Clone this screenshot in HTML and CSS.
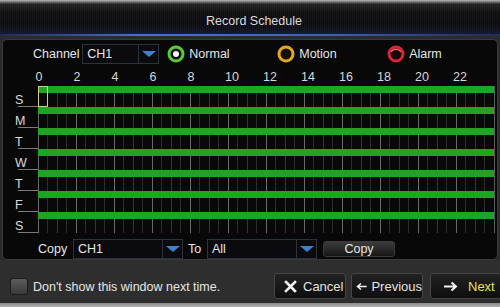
FILE: index.html
```html
<!DOCTYPE html>
<html>
<head>
<meta charset="utf-8">
<link rel="stylesheet" href="styles.css">
</head>
<body>
<div class="screen">
  <div class="titlebar"><span class="title">Record Schedule</span></div>
  <div class="panel">
    <div class="chrow">
      <span class="lbl">Channel</span>
      <div class="select ch"><span class="val">CH1</span><span class="arrow"><i></i></span></div>
      <div class="radio">
        <svg width="18" height="18" viewBox="0 0 18 18"><circle cx="9" cy="9" r="7" fill="#101010" stroke="#5cc93a" stroke-width="3"/><circle cx="9" cy="9" r="3" fill="#f4f4f4"/></svg>
        <span>Normal</span>
      </div>
      <div class="radio">
        <svg width="18" height="18" viewBox="0 0 18 18"><circle cx="9" cy="9" r="7" fill="#141008" stroke="#e2a826" stroke-width="3"/></svg>
        <span>Motion</span>
      </div>
      <div class="radio">
        <svg width="18" height="18" viewBox="0 0 18 18"><circle cx="9" cy="9" r="7" fill="#180808" stroke="#d42636" stroke-width="3"/><path d="M4 7 A6 6 0 0 1 14 7" fill="none" stroke="#f07080" stroke-width="1.2"/></svg>
        <span>Alarm</span>
      </div>
    </div>
    <div class="hours">
      <span>0</span><span>2</span><span>4</span><span>6</span><span>8</span><span class="dd">10</span><span class="dd">12</span><span class="dd">14</span><span class="dd">16</span><span class="dd">18</span><span class="dd">20</span><span class="dd">22</span>
    </div>
    <div class="grid">
      <div class="row"><div class="day">S</div><div class="track"><div class="bar"></div><div class="sel"></div></div></div>
      <div class="row"><div class="day">M</div><div class="track"><div class="bar"></div></div></div>
      <div class="row"><div class="day">T</div><div class="track"><div class="bar"></div></div></div>
      <div class="row"><div class="day">W</div><div class="track"><div class="bar"></div></div></div>
      <div class="row"><div class="day">T</div><div class="track"><div class="bar"></div></div></div>
      <div class="row"><div class="day">F</div><div class="track"><div class="bar"></div></div></div>
      <div class="row"><div class="day">S</div><div class="track"><div class="bar"></div></div></div>
    </div>
    <div class="copyrow">
      <span class="lbl">Copy</span>
      <div class="select wide"><span class="val">CH1</span><span class="arrow"><i></i></span></div>
      <span class="lbl to">To</span>
      <div class="select wide"><span class="val">All</span><span class="arrow"><i></i></span></div>
      <button class="copybtn">Copy</button>
    </div>
  </div>
  <div class="footer">
    <div class="check"><span class="box"></span><span>Don't show this window next time.</span></div>
    <div class="buttons">
      <button class="btn cancel">
        <svg width="13" height="13" viewBox="0 0 13 13"><path d="M2 2 L11 11 M11 2 L2 11" stroke="#f2f2f2" stroke-width="2.6" stroke-linecap="square"/></svg>
        <span>Cancel</span>
      </button>
      <button class="btn prev">
        <svg width="15" height="11" viewBox="0 0 15 11"><path d="M14 5.5 H2.5 M6.5 1.5 L2 5.5 L6.5 9.5" fill="none" stroke="#f2f2f2" stroke-width="2"/></svg>
        <span>Previous</span>
      </button>
      <button class="btn next">
        <svg width="15" height="11" viewBox="0 0 15 11"><path d="M1 5.5 H12.5 M8.5 1.5 L13 5.5 L8.5 9.5" fill="none" stroke="#f2f2f2" stroke-width="2"/></svg>
        <span class="nexttxt">Next</span>
      </button>
    </div>
  </div>
  <div class="strip"></div>
</div>
</body>
</html>
```
FILE: styles.css
```css
* { box-sizing: border-box; }
html, body { margin: 0; padding: 0; }
body {
  width: 500px;
  height: 307px;
  overflow: hidden;
  background: #2b2b2b;
  font-family: "Liberation Sans", Arial, sans-serif;
  font-size: 12.5px;
  color: #e6e6e6;
}
.screen { width: 500px; height: 307px; display: flex; flex-direction: column; overflow: hidden; }

.titlebar {
  height: 36px;
  flex: none;
  display: flex;
  align-items: center;
  justify-content: center;
  padding: 6px 0 0 8px;
  background:
    linear-gradient(90deg, #1c2c5a 0%, #4a70c8 28%, #3d62b8 65%, #1c2c5a 100%) left bottom / 100% 2px no-repeat,
    repeating-linear-gradient(90deg, rgba(255,255,255,0.035) 0 1px, transparent 1px 2px),
    linear-gradient(180deg, #b4b4b4 0, #707070 2px, #222 4px, #101010 12px, #0a0a10 24px, #14172a 34px);
}
.title { color: #dcdcdc; }

.panel {
  flex: none;
  margin: 3px 2px 0;
  height: 221px;
  background: #080808;
  border: 1px solid #3a3a3a;
  border-radius: 5px;
  padding-top: 4px;
}

.chrow {
  display: flex;
  align-items: center;
  height: 20px;
  padding-left: 30px;
}
.chrow .lbl { width: 51px; }
.select {
  display: flex;
  height: 20px;
  background: #0b0b0d;
  border: 1px solid #2c323e;
}
.select .val { flex: 1; padding-left: 4px; line-height: 18px; }
.select .arrow {
  width: 20px;
  border-left: 1px solid #2c323e;
  display: flex;
  align-items: center;
  justify-content: center;
}
.select .arrow i {
  width: 0; height: 0;
  border-left: 7px solid transparent;
  border-right: 7px solid transparent;
  border-top: 6px solid #3f80d2;
}
.select.ch { width: 80px; margin-right: 8px; }
.radio { display: flex; align-items: center; width: 114px; }
.radio svg { margin-right: 4px; flex: none; }

.hours {
  display: flex;
  height: 22px;
  padding: 7px 0 0 17px;
  line-height: 13px;
  color: #d8d8d8;
}
.hours span { width: 38px; text-align: center; flex: none; }
.hours span.dd { padding-left: 6px; }

.grid { display: flex; flex-direction: column; margin-left: 11px; }
.row { display: flex; height: 21px; }
.day {
  width: 24px;
  padding-left: 1px;
  display: flex;
  align-items: flex-end;
  line-height: 13px;
  color: #dcdcdc;
  background: linear-gradient(#7a7a7a, #7a7a7a) right bottom / 20px 1px no-repeat;
}
.track {
  position: relative;
  width: 457px;
  border-right: 1px solid #5a5a5a;
  background:
    linear-gradient(90deg, #6a6a6a 0 1px, transparent 1px) 0 0 / 38px 100%,
    linear-gradient(90deg, #363636 0 1px, transparent 1px 9px, #2c2c2c 9px 10px, transparent 10px) 0 0 / 19px 100%,
    #090909;
}
.bar { height: 7px; background: #1fa523; }
.sel {
  position: absolute;
  left: 0; top: 0;
  width: 10px; height: 21px;
  border: 1px solid #cfcf80;
}

.copyrow {
  display: flex;
  align-items: center;
  height: 20px;
  margin-top: 6px;
  padding-left: 35px;
}
.copyrow .lbl { width: 35px; }
.copyrow .lbl.to { width: 24px; padding-left: 5px; }
.select.wide { width: 110px; }
.copybtn {
  margin-left: 6px;
  width: 72px;
  height: 16px;
  padding: 0;
  font: inherit;
  color: #e6e6e6;
  background: linear-gradient(180deg, #3c3c3c, #161616);
  border: 1px solid #3a3a3a;
  border-radius: 3px;
  line-height: 14px;
}

.footer {
  flex: 1;
  display: flex;
  align-items: flex-start;
  padding: 13px 0 0 10px;
  background: #2e2e2e;
}
.check { display: flex; align-items: center; margin-top: 5px; }
.box {
  width: 18px; height: 17px;
  margin-right: 5px;
  background: linear-gradient(180deg, #5c5c5c, #3a3a3a);
  border: 1px solid #1c1c1c;
  border-radius: 3px;
}
.buttons { margin-left: auto; display: flex; margin-right: -2px; }
.btn {
  width: 72px;
  height: 26px;
  display: flex;
  align-items: center;
  padding: 0;
  font-family: "Liberation Sans", Arial, sans-serif;
  font-size: 13px;
  color: #e4e4e4;
  background: linear-gradient(180deg, #222, #0e0e0e);
  border: 1px solid #454545;
  border-radius: 3px;
}
.btn.cancel { padding-left: 9px; }
.btn.cancel svg { margin-right: 6px; }
.btn.prev { margin-left: 5px; padding-left: 4px; }
.btn.prev svg { margin-right: 4px; }
.btn.next { margin-left: 7px; padding-left: 12px; }
.btn.next svg { margin-right: 10px; }
.nexttxt { color: #e4e45a; }
.strip { height: 4px; flex: none; background: linear-gradient(180deg, #8a8a8a, #b0b0b0); }
```
